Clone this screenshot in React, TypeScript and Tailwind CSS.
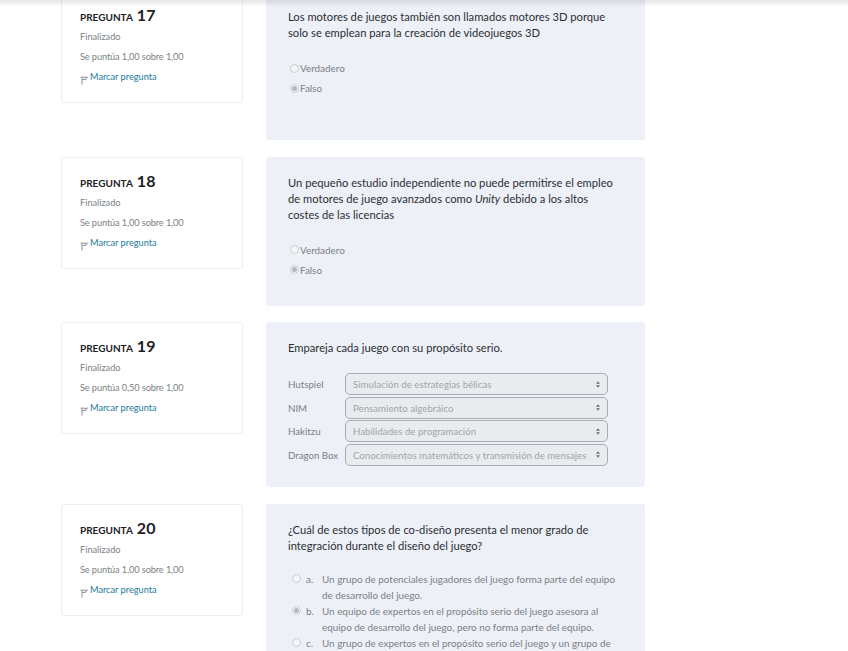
import type { ReactNode } from "react";

function Flag() {
  return (
    <svg width="8" height="10" viewBox="0 0 8 10" className="mt-[5px] shrink-0" fill="none" stroke="#8a8f94" strokeWidth="1">
      <path d="M2 9.5V2.2M.5 2.2C3 1.6 5 2.8 7.5 2.2L5.6 3.4 5.8 4.4C4.6 4.6 3 4.2 2 4.6" />
    </svg>
  );
}

function Info({ n, score }: { n: number; score: string }) {
  return (
    <div className="w-[182px] h-[112px] shrink-0 bg-white border border-[#eceef2] rounded-[3px] pl-[18px] pt-[11px]">
      <div className="flex items-baseline h-[19px] text-[#1d2125]">
        <span className="text-[10px] font-bold mr-[4px]">PREGUNTA</span>
        <span className="text-[16px] font-bold">{n}</span>
      </div>
      <div className="text-[9.2px] text-[#7b7f84] mt-[8px] leading-[14px]">Finalizado</div>
      <div className="text-[9.2px] tracking-[-0.1px] text-[#7b7f84] mt-[6px] leading-[14px]">Se puntúa {score} sobre 1,00</div>
      <div className="flex gap-[2px] mt-[6px] text-[9.2px] leading-[14px] text-[#1b7a9c]">
        <Flag />
        <span>Marcar pregunta</span>
      </div>
    </div>
  );
}

function Radio({ checked }: { checked?: boolean }) {
  return (
    <span className="w-[9px] h-[9px] rounded-full border border-[#c9ccd1] bg-[#f4f5f8] flex items-center justify-center shrink-0">
      {checked && <span className="w-[5px] h-[5px] rounded-full bg-[#b4b7bc]" />}
    </span>
  );
}

function TrueFalse() {
  return (
    <div className="mt-[20px] ml-[2px] flex flex-col gap-[5.5px] text-[9.9px] text-[#7b7f84] leading-[14.5px]">
      <div className="flex items-center gap-[1px]">
        <Radio />
        <span>Verdadero</span>
      </div>
      <div className="flex items-center gap-[1px]">
        <Radio checked />
        <span>Falso</span>
      </div>
    </div>
  );
}

function Row({ n, score, h, children }: { n: number; score: string; h: string; children: ReactNode }) {
  return (
    <div className="flex gap-[23px] mb-[16.5px]">
      <Info n={n} score={score} />
      <div className={`w-[379px] bg-[#edf0f7] rounded-[3px] pl-[22px] pr-[25px] text-[11.2px] leading-[16px] text-[#2b2f33] ${h}`}>
        {children}
      </div>
    </div>
  );
}

const matches = [
  ["Hutspiel", "Simulación de estrategias bélicas"],
  ["NIM", "Pensamiento algebráico"],
  ["Hakitzu", "Habilidades de programación"],
  ["Dragon Box", "Conocimientos matemáticos y transmisión de mensajes"],
];

const options = [
  ["a.", "Un grupo de potenciales jugadores del juego forma parte del equipo de desarrollo del juego.", false],
  ["b.", "Un equipo de expertos en el propósito serio del juego asesora al equipo de desarrollo del juego, pero no forma parte del equipo.", true],
  ["c.", "Un grupo de expertos en el propósito serio del juego y un grupo de potenciales jugadores forman parte del equipo de desarrollo.", false],
] as const;

export default function App() {
  return (
    <div className="relative h-[651px] overflow-hidden bg-white font-['Lato','Noto_Sans',sans-serif]">
      <div className="absolute top-0 inset-x-0 h-[7px] bg-gradient-to-b from-black/10 to-transparent z-10" />
      <div className="pl-[61px] -mt-[9px]">
        <Row n={17} score="1,00" h="h-[149px] pt-[18px]">
          <p>Los motores de juegos también son llamados motores 3D porque solo se emplean para la creación de videojuegos 3D</p>
          <TrueFalse />
        </Row>
        <Row n={18} score="1,00" h="h-[149px] pt-[18px]">
          <p>
            Un pequeño estudio independiente no puede permitirse el empleo de motores de juego avanzados como <em>Unity</em> debido a los altos costes de las licencias
          </p>
          <TrueFalse />
        </Row>
        <Row n={19} score="0,50" h="h-[165px] pt-[18px]">
          <p>Empareja cada juego con su propósito serio.</p>
          <div className="mt-[17px] flex flex-col gap-[1.5px] text-[9.7px] text-[#7b7f84]">
            {matches.map(([game, answer]) => (
              <div key={game} className="flex items-center">
                <span className="w-[57px] shrink-0">{game}</span>
                <div className="w-[263px] h-[22px] shrink-0 flex items-center justify-between pl-[7px] pr-[7px] rounded-[5px] border border-[#a9adb3] bg-[#e9ecef] text-[#a0a4a9] whitespace-nowrap">
                  <span>{answer}</span>
                  <svg width="4" height="7" viewBox="0 0 5 8" className="shrink-0" fill="#6c7075">
                    <path d="M2.5 0 5 3H0ZM2.5 8 0 5h5Z" />
                  </svg>
                </div>
              </div>
            ))}
          </div>
        </Row>
        <Row n={20} score="1,00" h="h-[200px] pt-[18px]">
          <p>¿Cuál de estos tipos de co-diseño presenta el menor grado de integración durante el diseño del juego?</p>
          <div className="mt-[17px] ml-[4px] pr-[3px] flex flex-col text-[9.9px] leading-[16px] text-[#7b7f84]">
            {options.map(([letter, text, checked]) => (
              <div key={letter} className="flex">
                <span className="mt-[3px]"><Radio checked={checked} /></span>
                <span className="w-[16px] ml-[5px] shrink-0">{letter}</span>
                <span>{text}</span>
              </div>
            ))}
          </div>
        </Row>
      </div>
    </div>
  );
}
